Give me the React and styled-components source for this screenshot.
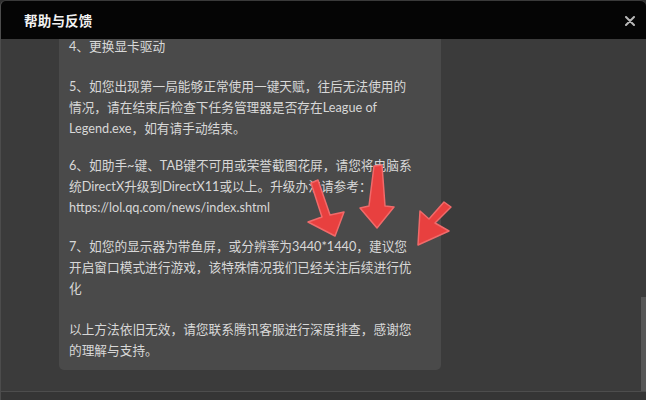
import React from 'react'
import styled, { createGlobalStyle } from 'styled-components'

const GlobalStyle = createGlobalStyle`
  html, body {
    margin: 0;
    padding: 0;
    background: #2f2f2f;
  }
  * { box-sizing: border-box; }
`;

const Dialog = styled.div`
  position: relative;
  width: 646px;
  height: 400px;
  display: flex;
  flex-direction: column;
  background: #3b3b3b;
  border-left: 1px solid #4c4c4c;
  border-top: 1px solid #3a3a3a;
  border-radius: 6px 6px 0 0;
  overflow: hidden;
  font-family: "Noto Sans CJK SC", "Noto Sans", sans-serif;
`;

const Header = styled.div`
  position: relative;
  z-index: 2;
  height: 38px;
  flex-shrink: 0;
  display: flex;
  align-items: center;
  justify-content: space-between;
  padding: 0 6px 0 23px;
  background: #050505;
`;

const Title = styled.h1`
  margin: 0;
  font-size: 13.5px;
  font-weight: 700;
  color: #f2f2f2;
  letter-spacing: 0.2px;
`;

const CloseButton = styled.button`
  width: 20px;
  height: 20px;
  padding: 0;
  border: none;
  background: transparent;
  display: flex;
  align-items: center;
  justify-content: center;
  margin-top: 2px;
  cursor: pointer;
`;

const Body = styled.div`
  flex: 1;
  display: flex;
  min-height: 0;
`;

const Scroller = styled.div`
  flex: 1;
  padding-left: 58px;
  overflow: hidden;
`;

const Card = styled.div`
  width: 382px;
  padding: 0 10px 9px 10px;
  background: #4a4a4a;
  border-radius: 0 0 5px 5px;
`;

const Paragraph = styled.p`
  margin: 0 0 ${({ $gap }) => $gap}px 0;
  font-family: "Lato", "Noto Sans CJK SC", sans-serif;
  font-size: 12.7px;
  line-height: ${({ $lh }) => $lh || 21}px;
  color: #d8d8d8;
  white-space: nowrap;
  &:last-child { margin-bottom: 0; }
`;

const Track = styled.div`
  width: 5px;
  display: flex;
  flex-direction: column;
  justify-content: flex-end;
`;

const Thumb = styled.div`
  height: 94px;
  background: #575757;
`;

const Footer = styled.div`
  height: 9px;
  flex-shrink: 0;
  border-top: 1px solid #4d4d4d;
  background: #353535;
`;

const Marks = styled.svg`
  position: absolute;
  left: 0;
  top: 0;
  pointer-events: none;
  z-index: 3;
`;

const paragraphs = [
  { gap: 22, lh: 15, lines: ['4、更换显卡驱动'] },
  {
    gap: 16,
    lines: [
      '5、如您出现第一局能够正常使用一键天赋，往后无法使用的',
      '情况，请在结束后检查下任务管理器是否存在League of',
      'Legend.exe，如有请手动结束。',
    ],
  },
  {
    gap: 18,
    lines: [
      '6、如助手~键、TAB键不可用或荣誉截图花屏，请您将电脑系',
      '统DirectX升级到DirectX11或以上。升级办法请参考：',
      'https://lol.qq.com/news/index.shtml',
    ],
  },
  {
    gap: 20,
    lines: [
      '7、如您的显示器为带鱼屏，或分辨率为3440*1440，建议您',
      '开启窗口模式进行游戏，该特殊情况我们已经关注后续进行优',
      '化',
    ],
  },
  {
    gap: 0,
    lines: [
      '以上方法依旧无效，请您联系腾讯客服进行深度排查，感谢您',
      '的理解与支持。',
    ],
  },
];

function App() {
  return (
    <>
      <GlobalStyle />
      <Dialog>
        <Header>
          <Title>帮助与反馈</Title>
          <CloseButton aria-label="关闭">
            <svg width="10" height="10" viewBox="0 0 10 10">
              <path d="M1 1 L9 9 M9 1 L1 9" stroke="#b8b8b8" strokeWidth="2" strokeLinecap="round" />
            </svg>
          </CloseButton>
        </Header>
        <Body>
          <Scroller>
            <Card>
              {paragraphs.map((p, i) => (
                <Paragraph key={i} $gap={p.gap} $lh={p.lh}>
                  {p.lines.map((line, j) => (
                    <React.Fragment key={j}>
                      {line}
                      {j < p.lines.length - 1 && <br />}
                    </React.Fragment>
                  ))}
                </Paragraph>
              ))}
            </Card>
          </Scroller>
          <Track>
            <Thumb />
          </Track>
        </Body>
        <Footer />
        {/* red arrows drawn over the screenshot */}
        <Marks width="646" height="400" viewBox="0 0 646 400">
          <g fill="#e8403f" stroke="#f06a6a" strokeWidth="1.5" strokeLinejoin="round">
            <polygon points="310,182 317,179 329,214 343,211 334,235 307,221 321,216" />
            <polygon points="373,165 381,164 384,205 393,206 376,227 359,207 368,205" />
            <polygon points="443,201 450,206 434,222 448,230 417,244 419,210 428,218" />
          </g>
        </Marks>
      </Dialog>
    </>
  )
}

export default App
